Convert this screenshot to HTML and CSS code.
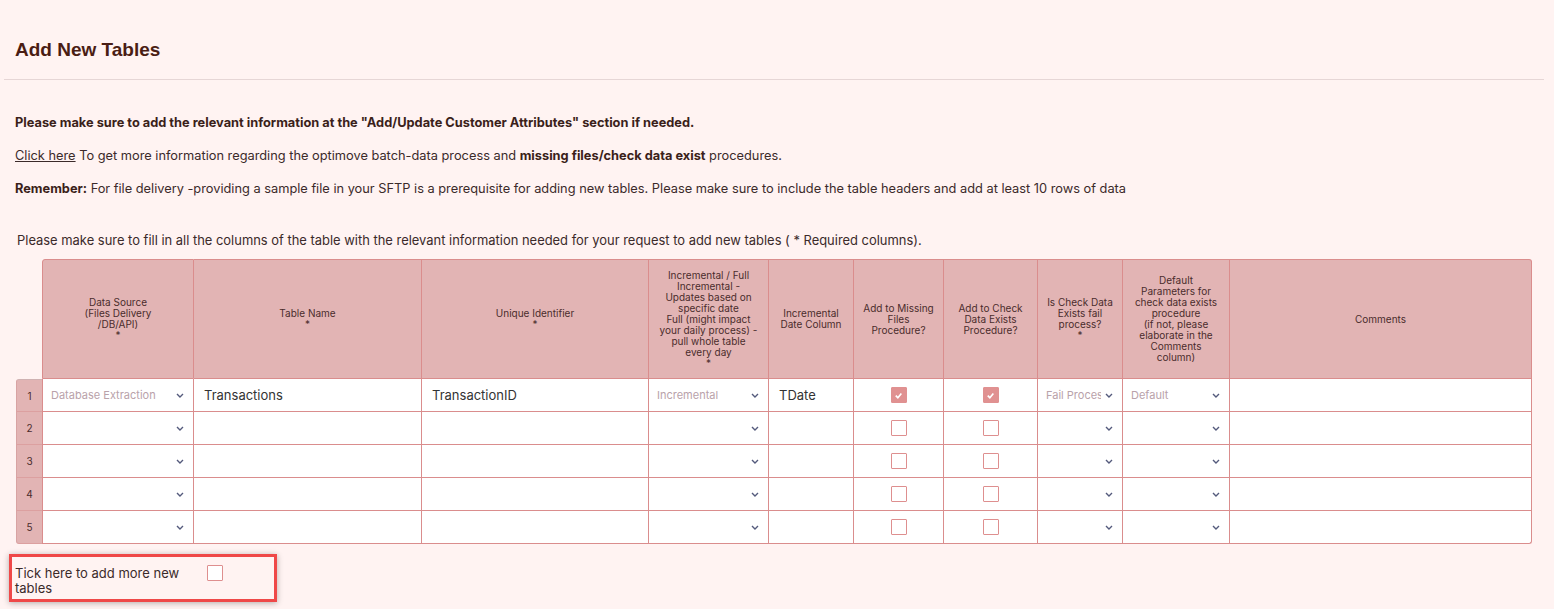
FILE: index.html
```html
<!DOCTYPE html>
<html lang="en">
<head>
<meta charset="utf-8">
<title>Add New Tables</title>
<link rel="stylesheet" href="styles.css">
</head>
<body>
<div class="page">
  <h2 class="title">Add New Tables</h2>
  <hr class="rule">
  <div class="intro">
    <p class="strong">Please make sure to add the relevant information at the "Add/Update Customer Attributes" section if needed.</p>
    <p><a href="#" class="link">Click here</a> To get more information regarding the optimove batch-data process and <b>missing files/check data exist</b> procedures.</p>
    <p><b>Remember:</b> For file delivery -providing a sample file in your SFTP is a prerequisite for adding new tables. Please make sure to include the table headers and add at least 10 rows of data</p>
  </div>
  <p class="note">Please make sure to fill in all the columns of the table with the relevant information needed for your request to add new tables ( * Required columns).</p>

  <table class="grid">
    <colgroup>
      <col class="c-num"><col class="c-src"><col class="c-name"><col class="c-uid"><col class="c-inc"><col class="c-date"><col class="c-miss"><col class="c-check"><col class="c-fail"><col class="c-def"><col class="c-com">
    </colgroup>
    <thead>
      <tr>
        <th class="corner"></th>
        <th class="first tl">Data Source<br>(Files Delivery<br>/DB/API)<br>*</th>
        <th>Table Name<br>*</th>
        <th>Unique Identifier<br>*</th>
        <th>Incremental / Full<br>Incremental -<br>Updates based on<br>specific date<br>Full (might impact<br>your daily process) -<br>pull whole table<br>every day<br>*</th>
        <th>Incremental<br>Date Column</th>
        <th>Add to Missing<br>Files<br>Procedure?</th>
        <th>Add to Check<br>Data Exists<br>Procedure?</th>
        <th>Is Check Data<br>Exists fail<br>process?<br>*</th>
        <th>Default<br>Parameters for<br>check data exists<br>procedure<br>(if not, please<br>elaborate in the<br>Comments<br>column)</th>
        <th class="tr">Comments</th>
      </tr>
    </thead>
    <tbody>
      <tr>
        <td class="num top">1</td>
        <td class="first"><div class="sel"><span class="val">Database Extraction</span><svg class="chev" viewBox="0 0 8 5"><polyline points="1,1 4,4 7,1"/></svg></div></td>
        <td class="txt">Transactions</td>
        <td class="txt">TransactionID</td>
        <td><div class="sel"><span class="val">Incremental</span><svg class="chev" viewBox="0 0 8 5"><polyline points="1,1 4,4 7,1"/></svg></div></td>
        <td class="txt">TDate</td>
        <td class="cb"><span class="box on"><svg viewBox="0 0 10 10"><polyline points="2.5,5.2 4.4,7 7.6,3.2"/></svg></span></td>
        <td class="cb"><span class="box on"><svg viewBox="0 0 10 10"><polyline points="2.5,5.2 4.4,7 7.6,3.2"/></svg></span></td>
        <td><div class="sel"><span class="val">Fail Process</span><svg class="chev" viewBox="0 0 8 5"><polyline points="1,1 4,4 7,1"/></svg></div></td>
        <td><div class="sel"><span class="val">Default</span><svg class="chev" viewBox="0 0 8 5"><polyline points="1,1 4,4 7,1"/></svg></div></td>
        <td></td>
      </tr>
      <tr>
        <td class="num">2</td>
        <td class="first"><div class="sel"><span class="val"></span><svg class="chev" viewBox="0 0 8 5"><polyline points="1,1 4,4 7,1"/></svg></div></td>
        <td></td><td></td>
        <td><div class="sel"><span class="val"></span><svg class="chev" viewBox="0 0 8 5"><polyline points="1,1 4,4 7,1"/></svg></div></td>
        <td></td>
        <td class="cb"><span class="box"></span></td>
        <td class="cb"><span class="box"></span></td>
        <td><div class="sel"><span class="val"></span><svg class="chev" viewBox="0 0 8 5"><polyline points="1,1 4,4 7,1"/></svg></div></td>
        <td><div class="sel"><span class="val"></span><svg class="chev" viewBox="0 0 8 5"><polyline points="1,1 4,4 7,1"/></svg></div></td>
        <td></td>
      </tr>
      <tr>
        <td class="num">3</td>
        <td class="first"><div class="sel"><span class="val"></span><svg class="chev" viewBox="0 0 8 5"><polyline points="1,1 4,4 7,1"/></svg></div></td>
        <td></td><td></td>
        <td><div class="sel"><span class="val"></span><svg class="chev" viewBox="0 0 8 5"><polyline points="1,1 4,4 7,1"/></svg></div></td>
        <td></td>
        <td class="cb"><span class="box"></span></td>
        <td class="cb"><span class="box"></span></td>
        <td><div class="sel"><span class="val"></span><svg class="chev" viewBox="0 0 8 5"><polyline points="1,1 4,4 7,1"/></svg></div></td>
        <td><div class="sel"><span class="val"></span><svg class="chev" viewBox="0 0 8 5"><polyline points="1,1 4,4 7,1"/></svg></div></td>
        <td></td>
      </tr>
      <tr>
        <td class="num">4</td>
        <td class="first"><div class="sel"><span class="val"></span><svg class="chev" viewBox="0 0 8 5"><polyline points="1,1 4,4 7,1"/></svg></div></td>
        <td></td><td></td>
        <td><div class="sel"><span class="val"></span><svg class="chev" viewBox="0 0 8 5"><polyline points="1,1 4,4 7,1"/></svg></div></td>
        <td></td>
        <td class="cb"><span class="box"></span></td>
        <td class="cb"><span class="box"></span></td>
        <td><div class="sel"><span class="val"></span><svg class="chev" viewBox="0 0 8 5"><polyline points="1,1 4,4 7,1"/></svg></div></td>
        <td><div class="sel"><span class="val"></span><svg class="chev" viewBox="0 0 8 5"><polyline points="1,1 4,4 7,1"/></svg></div></td>
        <td></td>
      </tr>
      <tr>
        <td class="num bl">5</td>
        <td class="first"><div class="sel"><span class="val"></span><svg class="chev" viewBox="0 0 8 5"><polyline points="1,1 4,4 7,1"/></svg></div></td>
        <td></td><td></td>
        <td><div class="sel"><span class="val"></span><svg class="chev" viewBox="0 0 8 5"><polyline points="1,1 4,4 7,1"/></svg></div></td>
        <td></td>
        <td class="cb"><span class="box"></span></td>
        <td class="cb"><span class="box"></span></td>
        <td><div class="sel"><span class="val"></span><svg class="chev" viewBox="0 0 8 5"><polyline points="1,1 4,4 7,1"/></svg></div></td>
        <td><div class="sel"><span class="val"></span><svg class="chev" viewBox="0 0 8 5"><polyline points="1,1 4,4 7,1"/></svg></div></td>
        <td class="br"></td>
      </tr>
    </tbody>
  </table>

  <div class="more">
    <span class="more-text">Tick here to add more new tables</span>
    <span class="box"></span>
  </div>
</div>
</body>
</html>
```

FILE: styles.css
```css
* { box-sizing: border-box; }

html, body {
  margin: 0;
  padding: 0;
  background: #fff3f2;
}

body {
  font-family: Inter, "Noto Sans", "Liberation Sans", sans-serif;
  color: #3b2a2a;
  font-size: 13px;
}

.page {
  padding: 38px 0 0 0;
}

.title {
  margin: 0;
  padding: 0 15px;
  font-family: "Liberation Sans", Arial, sans-serif;
  font-weight: 700;
  font-size: 19px;
  line-height: 24px;
  color: #4a1d14;
}

.rule {
  margin: 17px 10px 0 4px;
  border: 0;
  border-top: 1px solid #e6d6d6;
  height: 0;
}

.intro {
  padding: 33px 15px 0;
  display: flex;
  flex-direction: column;
  gap: 13px;
}

.intro p {
  margin: 0;
  font-size: 12.8px;
  line-height: 20px;
}

.intro b, .strong {
  font-weight: 700;
  color: #3b1f1a;
}

.link {
  color: #3b2a2a;
  text-decoration: underline;
}

.note {
  margin: 31px 0 0 17px;
  font-size: 12.93px;
  line-height: 20px;
}

.grid {
  margin: 9px 0 0 16px;
  table-layout: fixed;
  width: 1516px;
  border-collapse: separate;
  border-spacing: 0;
}

.c-num { width: 26px; }
.c-src { width: 152px; }
.c-name { width: 228px; }
.c-uid { width: 227px; }
.c-inc { width: 120px; }
.c-date { width: 85px; }
.c-miss { width: 90px; }
.c-check { width: 94px; }
.c-fail { width: 85px; }
.c-def { width: 107px; }
.c-com { width: 302px; }

.grid th {
  height: 120px;
  padding: 0 2px;
  background: #e2b4b4;
  border-top: 1px solid #da8d8d;
  border-bottom: 1px solid #da8d8d;
  border-right: 1px solid #da8d8d;
  font-weight: 400;
  font-size: 10px;
  line-height: 11px;
  color: #4a2c2c;
  text-align: center;
  vertical-align: middle;
}

.grid th.corner {
  background: transparent;
  border: 0;
}

.grid th.first, .grid td.first {
  border-left: 1px solid #da8d8d;
}

.grid th.tl { border-top-left-radius: 3px; }
.grid th.tr { border-top-right-radius: 3px; }

.grid td {
  height: 33px;
  padding: 0;
  background: #fff;
  border-bottom: 1px solid #da8d8d;
  border-right: 1px solid #da8d8d;
  vertical-align: middle;
}

.grid td.num {
  background: #e2b4b4;
  border-left: 1px solid #d8a3a3;
  border-right: 0;
  border-bottom: 1px solid #dca0a0;
  font-size: 10px;
  color: #4a2c2c;
  text-align: center;
}

.grid td.num.top {
  border-top: 1px solid #cfb2b2;
  border-top-left-radius: 3px;
}

.grid td.num.bl { border-bottom-left-radius: 3px; }
.grid td.br { border-bottom-right-radius: 3px; }

.grid td.txt {
  padding-left: 10px;
  font-size: 13px;
  color: #333;
}

.sel {
  display: flex;
  align-items: center;
  padding: 0 9px 0 8px;
  gap: 4px;
}

.val {
  flex: 1;
  min-width: 0;
  overflow: hidden;
  white-space: nowrap;
  font-size: 11px;
  color: #b9a2aa;
}

.chev {
  width: 8px;
  height: 5px;
  flex: none;
  fill: none;
  stroke: #545a7c;
  stroke-width: 1.4;
}

.cb .box {
  display: flex;
  margin: 0 auto;
}

.box {
  display: inline-flex;
  align-items: center;
  justify-content: center;
  width: 16px;
  height: 16px;
  border: 1px solid #de8f8f;
  border-radius: 1px;
  background: #fff;
}

.box.on {
  background: #e09191;
  border-color: #e09191;
}

.box svg {
  width: 11px;
  height: 11px;
  fill: none;
  stroke: #fff;
  stroke-width: 1.5;
}

.more {
  margin: 10px 0 8px 9px;
  width: 268px;
  border: 3px solid #ef4848;
  padding: 9px 0 3px 3px;
  display: flex;
  align-items: flex-start;
  box-shadow: 0 1px 6px rgba(0, 0, 0, 0.3);
}

.more-text {
  width: 192px;
  line-height: 15px;
  font-size: 13px;
  color: #3b2a2a;
}

.more .box {
  margin-top: -1px;
}
```
